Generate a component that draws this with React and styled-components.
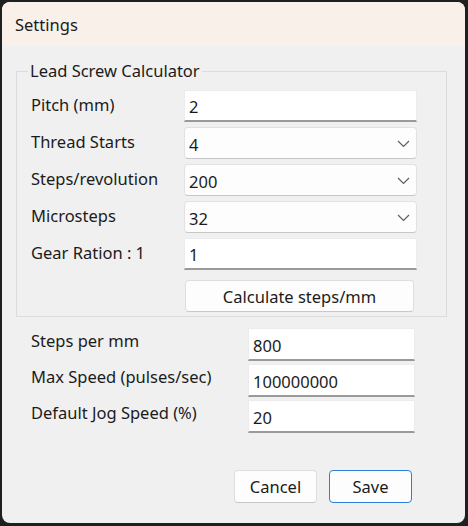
import styled, { createGlobalStyle } from "styled-components";

const GlobalStyle = createGlobalStyle`
  html, body {
    margin: 0;
    padding: 0;
    background: #1f1f1f;
  }
  body {
    font-family: "Noto Sans", "Open Sans", sans-serif;
    color: #1b1b1b;
  }
`

const Screen = styled.div`
  width: 468px;
  height: 526px;
  padding: 2px 3px 3px 2px;
  box-sizing: border-box;
`

const Window = styled.div`
  height: 100%;
  display: flex;
  flex-direction: column;
  background: #f0f0f0;
  border-radius: 8px;
  overflow: hidden;
`

const TitleBar = styled.div`
  height: 44px;
  flex-shrink: 0;
  display: flex;
  align-items: center;
  padding-left: 13px;
  background: #f9f0ea;
  font-size: 16.5px;
`

const Body = styled.div`
  flex: 1;
  display: flex;
  flex-direction: column;
  padding: 14px 18px 20px 14px;
`

const Group = styled.fieldset`
  margin: 0;
  padding: 0 29px 4px 14px;
  border: 1px solid #dcdcdc;
  min-width: 0;
`

const Legend = styled.legend`
  margin-left: -3px;
  padding: 0 2px;
  font-size: 16.5px;
  line-height: 22px;
`

const FormGrid = styled.div`
  display: grid;
  grid-template-columns: ${(props) => props.labelWidth}px 1fr;
  grid-template-rows: repeat(${(props) => props.rows}, ${(props) => props.rowHeight}px) auto;
  row-gap: ${(props) => props.gap}px;
  align-items: center;
  padding-top: ${(props) => props.top || 0}px;
  padding-left: ${(props) => props.left || 0}px;
  width: ${(props) => props.width ? props.width + 'px' : 'auto'};
`

const Label = styled.div`
  font-size: 16.5px;
  align-self: ${(props) => props.top ? 'start' : 'center'};
  padding-top: ${(props) => props.top ? '1px' : '0'};
  margin-top: ${(props) => props.top ? '0' : '-4px'};
  white-space: nowrap;
`

const TextBox = styled.div`
  height: 100%;
  box-sizing: border-box;
  display: flex;
  align-items: center;
  padding: 2px 4px 0;
  background: #ffffff;
  border: 1px solid #ececec;
  border-bottom: 2px solid #9a9a9a;
  font-size: 16.5px;
`

const Combo = styled.div`
  height: 100%;
  box-sizing: border-box;
  display: flex;
  align-items: center;
  justify-content: space-between;
  padding: 2px 6px 0 4px;
  background: #fdfdfd;
  border: 1px solid #e2e2e2;
  border-bottom-color: #c6c6c6;
  border-radius: 4px;
  font-size: 16.5px;
`

const Button = styled.button`
  height: ${(props) => props.height || 32}px;
  width: ${(props) => props.width ? props.width + 'px' : '100%'};
  padding: 0;
  box-sizing: border-box;
  font-family: inherit;
  font-size: 16.5px;
  color: #1b1b1b;
  background: #fdfdfd;
  border: 1px solid ${(props) => props.primary ? '#2f7fd6' : '#dedede'};
  border-bottom-color: ${(props) => props.primary ? '#2f7fd6' : '#c8c8c8'};
  border-radius: 4px;
`

const ButtonCell = styled.div`
  grid-column: 2;
  padding: 5px 3px 0 1px;
`

const Actions = styled.div`
  margin-top: auto;
  display: flex;
  justify-content: flex-end;
  gap: 12px;
  padding-right: 35px;
`

const Chevron = () => (
  <svg width="13" height="8" viewBox="0 0 13 8">
    <polyline points="1,1 6.5,6.5 12,1" fill="none" stroke="#5f5f5f" strokeWidth="1.2" />
  </svg>
)

const calcRows = [
  { label: 'Pitch (mm)', value: '2' },
  { label: 'Thread Starts', value: '4', combo: true },
  { label: 'Steps/revolution', value: '200', combo: true },
  { label: 'Microsteps', value: '32', combo: true },
  { label: 'Gear Ration : 1', value: '1' },
]

const motorRows = [
  { label: 'Steps per mm', value: '800' },
  { label: 'Max Speed (pulses/sec)', value: '100000000' },
  { label: 'Default Jog Speed (%)', value: '20' },
]

const App = () => {
  return (
    <Screen>
      <GlobalStyle />
      <Window>
        <TitleBar>Settings</TitleBar>
        <Body>
          <Group>
            <Legend>Lead Screw Calculator</Legend>
            <FormGrid labelWidth={153} rows={calcRows.length} rowHeight={32} gap={5} top={8}>
              {calcRows.map((row) => (
                <>
                  <Label key={row.label}>{row.label}</Label>
                  {row.combo ? (
                    <Combo>
                      {row.value}
                      <Chevron />
                    </Combo>
                  ) : (
                    <TextBox>{row.value}</TextBox>
                  )}
                </>
              ))}
              <ButtonCell>
                <Button>Calculate steps/mm</Button>
              </ButtonCell>
            </FormGrid>
          </Group>
          <FormGrid labelWidth={217} rows={motorRows.length} rowHeight={33} gap={3} top={11} left={15} width={384}>
            {motorRows.map((row) => (
              <>
                <Label top key={row.label}>{row.label}</Label>
                <TextBox>{row.value}</TextBox>
              </>
            ))}
          </FormGrid>
          <Actions>
            <Button width={83} height={33}>Cancel</Button>
            <Button primary width={83} height={33}>Save</Button>
          </Actions>
        </Body>
      </Window>
    </Screen>
  )
}

export default App
